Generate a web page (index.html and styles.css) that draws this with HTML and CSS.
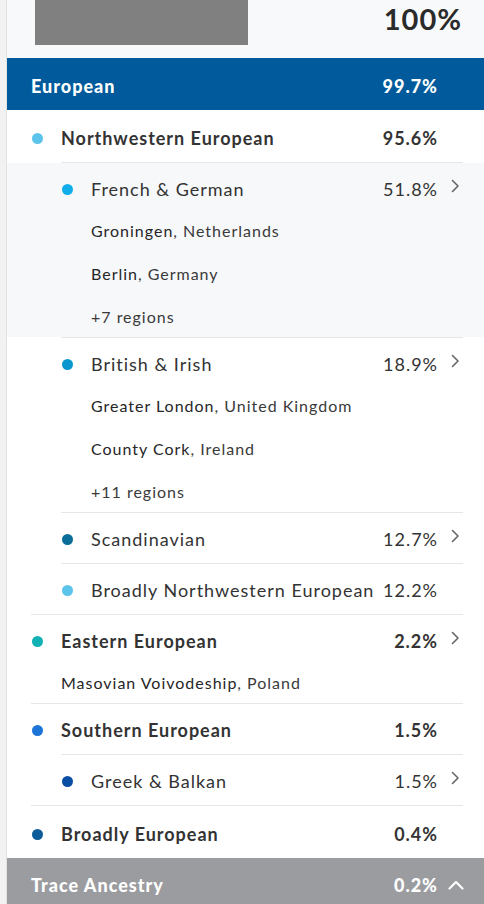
FILE: index.html
```html
<!DOCTYPE html>
<html lang="en">
<head>
<meta charset="utf-8">
<title>Ethnicity estimate</title>
<link rel="stylesheet" href="styles.css">
</head>
<body>
<div class="page">
  <div class="rail"></div>
  <main class="panel">
    <section class="summary">
      <div class="redacted"></div>
      <div class="total">100%</div>
    </section>

    <div class="region-head">
      <span class="label">European</span>
      <span class="pct">99.7%</span>
      <span class="chev-slot"></span>
    </div>

    <div class="row lvl1 first">
      <span class="dot-cell"><span class="dot c-nw"></span></span>
      <span class="label">Northwestern European</span>
      <span class="pct">95.6%</span>
      <span class="chev-slot"></span>
    </div>
    <div class="divider d2"></div>

    <div class="block hl">
      <div class="row lvl2">
        <span class="dot-cell"><span class="dot c-fg"></span></span>
        <span class="label">French &amp; German</span>
        <span class="pct">51.8%</span>
        <span class="chev-slot"><svg class="chev" width="9" height="14" viewBox="0 0 9 14"><path d="M1.5 1.5 L7 7 L1.5 12.5"/></svg></span>
      </div>
      <div class="places">
        <div class="place"><span class="town">Groningen</span>, Netherlands</div>
        <div class="place"><span class="town">Berlin</span>, Germany</div>
        <div class="place more">+7 regions</div>
      </div>
    </div>
    <div class="divider d2"></div>

    <div class="block">
      <div class="row lvl2">
        <span class="dot-cell"><span class="dot c-bi"></span></span>
        <span class="label">British &amp; Irish</span>
        <span class="pct">18.9%</span>
        <span class="chev-slot"><svg class="chev" width="9" height="14" viewBox="0 0 9 14"><path d="M1.5 1.5 L7 7 L1.5 12.5"/></svg></span>
      </div>
      <div class="places">
        <div class="place"><span class="town">Greater London</span>, United Kingdom</div>
        <div class="place"><span class="town">County Cork</span>, Ireland</div>
        <div class="place more">+11 regions</div>
      </div>
    </div>
    <div class="divider d2"></div>

    <div class="row lvl2">
      <span class="dot-cell"><span class="dot c-sc"></span></span>
      <span class="label">Scandinavian</span>
      <span class="pct">12.7%</span>
      <span class="chev-slot"><svg class="chev" width="9" height="14" viewBox="0 0 9 14"><path d="M1.5 1.5 L7 7 L1.5 12.5"/></svg></span>
    </div>
    <div class="divider d2"></div>

    <div class="row lvl2">
      <span class="dot-cell"><span class="dot c-bnw"></span></span>
      <span class="label">Broadly Northwestern European</span>
      <span class="pct">12.2%</span>
      <span class="chev-slot"></span>
    </div>
    <div class="divider d1"></div>

    <div class="block">
      <div class="row lvl1">
        <span class="dot-cell"><span class="dot c-ee"></span></span>
        <span class="label">Eastern European</span>
        <span class="pct">2.2%</span>
        <span class="chev-slot"><svg class="chev" width="9" height="14" viewBox="0 0 9 14"><path d="M1.5 1.5 L7 7 L1.5 12.5"/></svg></span>
      </div>
      <div class="places p1">
        <div class="place"><span class="town">Masovian Voivodeship</span>, Poland</div>
      </div>
    </div>
    <div class="divider d1"></div>

    <div class="row lvl1">
      <span class="dot-cell"><span class="dot c-se"></span></span>
      <span class="label">Southern European</span>
      <span class="pct">1.5%</span>
      <span class="chev-slot"></span>
    </div>
    <div class="divider d2"></div>

    <div class="row lvl2">
      <span class="dot-cell"><span class="dot c-gb"></span></span>
      <span class="label">Greek &amp; Balkan</span>
      <span class="pct">1.5%</span>
      <span class="chev-slot"><svg class="chev" width="9" height="14" viewBox="0 0 9 14"><path d="M1.5 1.5 L7 7 L1.5 12.5"/></svg></span>
    </div>
    <div class="divider d1"></div>

    <div class="row lvl1 last">
      <span class="dot-cell"><span class="dot c-be"></span></span>
      <span class="label">Broadly European</span>
      <span class="pct">0.4%</span>
      <span class="chev-slot"></span>
    </div>

    <div class="trace">
      <span class="label">Trace Ancestry</span>
      <span class="pct">0.2%</span>
      <span class="chev-slot up"><svg class="chev-up" width="16" height="10" viewBox="0 0 16 10"><path d="M1.5 8.5 L8 2 L14.5 8.5"/></svg></span>
    </div>
  </main>
</div>
</body>
</html>
```

FILE: styles.css
```css
* { box-sizing: border-box; }

html, body {
  margin: 0;
  padding: 0;
  background: #ffffff;
}

body {
  font-family: Lato, "Open Sans", "Liberation Sans", sans-serif;
  color: #333333;
  font-size: 18px;
  letter-spacing: 0.055em;
}

.page {
  display: flex;
  min-height: 904px;
}

.rail {
  width: 7px;
  flex: 0 0 7px;
  background: #f2f2f2;
  border-right: 1px solid #e2e2e2;
}

.panel {
  flex: 1;
  min-width: 0;
}

.summary {
  height: 58px;
  display: flex;
  align-items: flex-start;
  background: #f8f9fa;
}

.redacted {
  width: 213px;
  height: 45px;
  margin-left: 28px;
  background: #808080;
}

.total {
  margin-left: auto;
  padding-right: 22px;
  font-size: 29px;
  font-weight: 700;
  line-height: 38px;
  color: #2b2b2b;
}

.region-head,
.trace,
.row {
  display: flex;
  align-items: center;
  line-height: 24px;
}

.label { flex: 1; white-space: nowrap; }
.pct { text-align: right; white-space: nowrap; }

.chev-slot {
  width: 46px;
  flex: 0 0 46px;
  display: flex;
  align-items: center;
  padding-left: 13px;
}

.region-head {
  background: #005a9c;
  color: #ffffff;
  font-weight: 900;
  font-size: 18px;
  padding: 16px 0 12px 24px;
}

.row {
  padding-top: 14px;
  padding-bottom: 12px;
}

.row.first,
.row.last {
  padding-top: 16px;
}

.lvl1 { padding-left: 24px; font-weight: 700; }
.lvl2 { padding-left: 54px; }

.dot-cell {
  width: 30px;
  flex: 0 0 30px;
  display: flex;
  align-items: center;
}

.dot {
  width: 11px;
  height: 11px;
  border-radius: 50%;
  margin-left: 1px;
}

.c-nw { background: #5cc3ea; }
.c-fg { background: #12aeeb; }
.c-bi { background: #0a96cf; }
.c-sc { background: #0a6e98; }
.c-bnw { background: #5cc3ea; }
.c-ee { background: #12b1b5; }
.c-se { background: #1c74d6; }
.c-gb { background: #0a4ea3; }
.c-be { background: #0b5c99; }

.chev {
  margin-bottom: 6px;
}

.chev path {
  fill: none;
  stroke: #666666;
  stroke-width: 1.6;
  stroke-linecap: round;
  stroke-linejoin: round;
}

.divider {
  height: 1px;
  background: #e6e6e6;
  margin-right: 21px;
}

.d1 { margin-left: 24px; }
.d2 { margin-left: 54px; }

.block.hl { background: #f7f8fa; }

.places {
  display: flex;
  flex-direction: column;
  gap: 23px;
  padding: 8px 0 10px 84px;
  font-size: 16px;
  line-height: 20px;
  color: #3a3a3a;
}

.places.p1 { padding-left: 54px; }

.town { color: #262626; }

.trace {
  background: #9b9ca0;
  color: #ffffff;
  font-weight: 900;
  font-size: 18px;
  padding: 15px 0 15px 24px;
}

.chev-slot.up { padding-left: 10px; }

.chev-up path {
  fill: none;
  stroke: #ffffff;
  stroke-width: 2.2;
  stroke-linecap: round;
  stroke-linejoin: round;
}
```
